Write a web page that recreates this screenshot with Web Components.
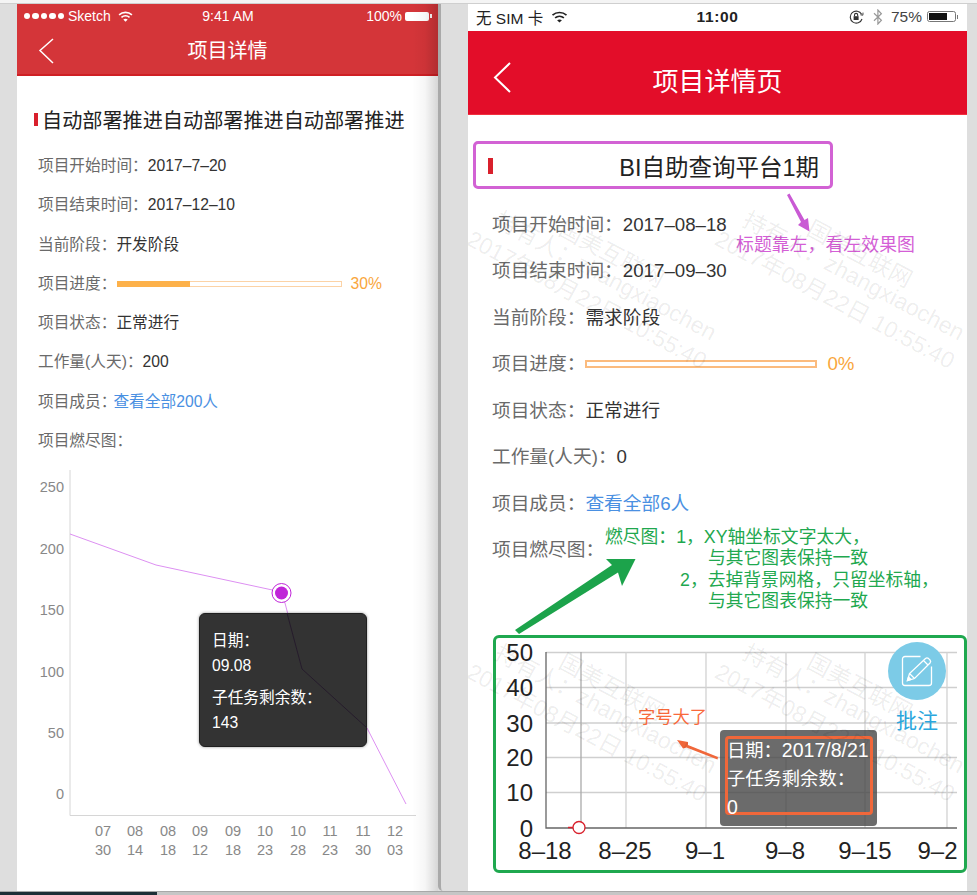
<!DOCTYPE html>
<html lang="zh">
<head>
<meta charset="utf-8">
<title>项目详情</title>
<style>
  html, body { margin: 0; padding: 0; background: #dedede; }
  body { font-family: "Liberation Sans", "Noto Sans CJK SC", sans-serif; }
</style>
</head>
<body>
<review-page>
  <phone-panel slot="left" side="left">
    <status-left></status-left>
    <nav-bar title="项目详情" variant="left"></nav-bar>
    <page-title variant="left">自动部署推进自动部署推进自动部署推进</page-title>
    <info-list variant="left">
      <info-row label="项目开始时间：">2017–7–20</info-row>
      <info-row label="项目结束时间：">2017–12–10</info-row>
      <info-row label="当前阶段：">开发阶段</info-row>
      <info-row label="项目进度："><progress-line value="30" fill="32.5"></progress-line></info-row>
      <info-row label="项目状态：">正常进行</info-row>
      <info-row label="工作量(人天)：">200</info-row>
      <info-row label="项目成员："><member-link style="margin-left:-3px">查看全部200人</member-link></info-row>
      <info-row label="项目燃尽图："></info-row>
    </info-list>
    <burn-chart></burn-chart>
  </phone-panel>

  <phone-panel slot="right" side="right">
    <status-right></status-right>
    <nav-bar title="项目详情页" variant="right"></nav-bar>
    <page-title variant="right">BI自助查询平台1期</page-title>
    <info-list variant="right">
      <info-row label="项目开始时间：">2017–08–18</info-row>
      <info-row label="项目结束时间：">2017–09–30</info-row>
      <info-row label="当前阶段：">需求阶段</info-row>
      <info-row label="项目进度："><progress-line value="0" variant="right"></progress-line></info-row>
      <info-row label="项目状态：">正常进行</info-row>
      <info-row label="工作量(人天)：">0</info-row>
      <info-row label="项目成员："><member-link>查看全部6人</member-link></info-row>
      <info-row label="项目燃尽图："></info-row>
    </info-list>
    <grid-chart></grid-chart>
    <review-notes></review-notes>
    <water-mark style="left:1px;top:233px"></water-mark>
    <water-mark style="left:249px;top:233px"></water-mark>
    <water-mark style="left:1px;top:666px"></water-mark>
    <water-mark style="left:249px;top:666px"></water-mark>
  </phone-panel>
</review-page>

<script>
const wifiIcon = (color, w, h) => `
  <svg width="${w}" height="${h}" viewBox="0 0 16 12" fill="none" stroke="${color}" stroke-width="1.7">
    <path d="M1 4.2C5 .6 11 .6 15 4.2"/>
    <path d="M3.6 6.9C6.1 4.8 9.9 4.8 12.4 6.9"/>
    <path d="M8 11.6L5.6 9.2C7 8.2 9 8.2 10.4 9.2Z" fill="${color}" stroke="none"/>
  </svg>`;

class ReviewPage extends HTMLElement {
  constructor() {
    super();
    this.shadowDOM = this.attachShadow({ mode: 'open' });
  }

  connectedCallback() {
    this.shadowDOM.innerHTML = `
      <style>
        :host { display: flex; flex-direction: column; width: 977px; height: 895px; overflow: hidden; background: #dedede; }
        .top { height: 3px; background: #f4f4f4; border-bottom: 1px solid #cfcfcf; flex: none; }
        .main { flex: 1; display: flex; min-height: 0; padding-left: 17px; }
        .gap { width: 30px; flex: none; border-left: 3px solid #a9a9a9; box-sizing: border-box; border-bottom-left-radius: 5px; }
        .bottom { height: 4px; flex: none; display: flex; background: #c6c6c6; border-top: 1px solid #a8a8a8; box-sizing: border-box; }
        .dark { width: 157px; background: #1e2f37; }
      </style>
      <div class="top"></div>
      <div class="main">
        <slot name="left"></slot>
        <div class="gap"></div>
        <slot name="right"></slot>
      </div>
      <div class="bottom"><div class="dark"></div></div>
    `;
  }
}

class PhonePanel extends HTMLElement {
  constructor() {
    super();
    this.shadowDOM = this.attachShadow({ mode: 'open' });
  }

  connectedCallback() {
    const isLeft = this.getAttribute('side') === 'left';
    this.shadowDOM.innerHTML = `
      <style>
        :host { display: block; position: relative; overflow: hidden; background: #fff; height: 887px; flex: none; width: ${isLeft ? 421 : 499}px; }
        .edge { position: absolute; top: 0; bottom: 0; right: 0; width: 26px; pointer-events: none;
          background: linear-gradient(to right, rgba(0,0,0,0), rgba(0,0,0,.035) 50%, rgba(0,0,0,.16)); }
      </style>
      <slot></slot>
      ${isLeft ? '<div class="edge"></div>' : ''}
    `;
  }
}

class StatusLeft extends HTMLElement {
  constructor() {
    super();
    this.shadowDOM = this.attachShadow({ mode: 'open' });
  }

  connectedCallback() {
    this.shadowDOM.innerHTML = `
      <style>
        :host { display: grid; grid-template-columns: 1fr auto 1fr; align-items: center; height: 27px; background: #d43539; color: #fff; font-size: 14px; padding: 0 6px 3px 7px; box-sizing: border-box; }
        .l, .r { display: flex; align-items: center; }
        .r { justify-content: flex-end; gap: 3px; }
        .dots { display: flex; gap: 2px; margin-right: 4px; }
        .dots i { width: 6.4px; height: 6.4px; border-radius: 50%; background: #fff; display: block; }
        svg { margin-left: 7px; }
        .batt { width: 24px; height: 9px; background: #fff; border-radius: 2px; position: relative; margin-right: 3px; }
        .batt::after { content: ""; position: absolute; right: -2.5px; top: 2.5px; width: 2px; height: 4px; background: #fff; }
      </style>
      <div class="l">
        <div class="dots"><i></i><i></i><i></i><i></i><i></i></div>
        <span>Sketch</span>${wifiIcon('#fff', 15, 11)}
      </div>
      <div>9:41 AM</div>
      <div class="r"><span>100%</span><div class="batt"></div></div>
    `;
  }
}

class StatusRight extends HTMLElement {
  constructor() {
    super();
    this.shadowDOM = this.attachShadow({ mode: 'open' });
  }

  connectedCallback() {
    this.shadowDOM.innerHTML = `
      <style>
        :host { display: grid; grid-template-columns: 1fr auto 1fr; align-items: center; height: 27px; background: #fff; color: #222; font-size: 15.5px; padding: 0 8px 2px; box-sizing: border-box; }
        .l, .r { display: flex; align-items: center; }
        .l svg { margin-left: 8px; }
        .r { justify-content: flex-end; color: #444; }
        .time { font-weight: 700; letter-spacing: .6px; }
        .lock { margin-right: 9px; }
        .bt { margin-right: 8px; }
        .batt { width: 29px; height: 11px; border: 1px solid #777; border-radius: 2.5px; box-sizing: border-box; padding: 1px; margin: 0 3px 0 5px; position: relative; }
        .batt i { display: block; height: 100%; width: 72%; background: #111; }
        .batt::after { content: ""; position: absolute; right: -3px; top: 2.5px; width: 1.5px; height: 4px; background: #777; }
      </style>
      <div class="l"><span>无 SIM 卡</span>${wifiIcon('#222', 17, 12)}</div>
      <div class="time">11:00</div>
      <div class="r">
        <svg class="lock" width="15" height="14" viewBox="0 0 15 14" fill="none" stroke="#333" stroke-width="1.1">
          <path d="M12.6 4.3A6 6 0 1 0 13 9"/>
          <path d="M11.4 4.8L13.9 5.2L14 2.6" stroke-width=".9"/>
          <rect x="4.6" y="6.2" width="5" height="3.8" fill="#333" stroke="none"/>
          <path d="M5.5 6.2V5a1.6 1.6 0 0 1 3.2 0v1.2"/>
        </svg>
        <svg class="bt" width="10" height="16" viewBox="0 0 10 16" fill="none" stroke="#999" stroke-width="1.2">
          <path d="M1 4.2L8.4 11.2L4.9 15V1L8.4 4.8L1 11.8"/>
        </svg>
        <span>75%</span>
        <div class="batt"><i></i></div>
      </div>
    `;
  }
}

class NavBar extends HTMLElement {
  constructor() {
    super();
    this.shadowDOM = this.attachShadow({ mode: 'open' });
  }

  connectedCallback() {
    const big = this.getAttribute('variant') === 'right';
    this.shadowDOM.innerHTML = `
      <style>
        :host { display: flex; align-items: center; justify-content: center; position: relative; box-sizing: border-box;
          height: ${big ? 84 : 45}px; background: ${big ? '#e30d29' : '#d43539'};
          border-bottom: ${big ? '1px solid #f2303f' : '2px solid #cf1f24'}; color: #fff; font-size: ${big ? 26 : 20}px; }
        svg { position: absolute; left: ${big ? 24 : 21}px; top: ${big ? 30 : 6}px; }
        span { margin-top: ${big ? 14 : -6}px; }
      </style>
      ${big
        ? `<svg width="20" height="32" viewBox="0 0 20 32" fill="none" stroke="#fff" stroke-width="2"><path d="M18 2L3 16.5L18 31"/></svg>`
        : `<svg width="16" height="27" viewBox="0 0 16 27" fill="none" stroke="#fff" stroke-width="1.5"><path d="M15 2L2 13.5L15 26"/></svg>`}
      <span>${this.getAttribute('title')}</span>
    `;
  }
}

class PageTitle extends HTMLElement {
  constructor() {
    super();
    this.shadowDOM = this.attachShadow({ mode: 'open' });
  }

  connectedCallback() {
    const big = this.getAttribute('variant') === 'right';
    this.shadowDOM.innerHTML = `
      <style>
        :host { display: flex; align-items: center; box-sizing: border-box; color: #222; }
        :host([variant=left]) { margin: 30px 0 14px 17px; height: 26px; font-size: 20.15px; }
        :host([variant=right]) { margin: 26px 0 12.5px 5px; width: 360px; height: 48px; padding: 1px 11px 0 12px; font-size: 23.5px;
          border: 3px solid #d262d4; border-radius: 5px; justify-content: space-between; }
        i { display: block; flex: none; background: #d9202c; width: ${big ? 5 : 4}px; height: ${big ? 16 : 13}px; margin-right: 4px; }
      </style>
      <i></i><div><slot></slot></div>
    `;
  }
}

class InfoList extends HTMLElement {
  constructor() {
    super();
    this.shadowDOM = this.attachShadow({ mode: 'open' });
  }

  connectedCallback() {
    this.shadowDOM.innerHTML = `
      <style>
        :host { display: block; }
        :host([variant=left]) { padding-left: 21px; font-size: 15.7px; --row-h: 39.3px; --bar-w: 225px; --bar-h: 6px; --pct-gap: 8px; --bar-left: 1px; }
        :host([variant=right]) { padding-left: 24px; font-size: 18.7px; --row-h: 46.5px; --bar-w: 232px; --bar-h: 8px; --pct-gap: 10px; --bar-left: 0px; }
      </style>
      <slot></slot>
    `;
  }
}

class InfoRow extends HTMLElement {
  constructor() {
    super();
    this.shadowDOM = this.attachShadow({ mode: 'open' });
  }

  connectedCallback() {
    this.shadowDOM.innerHTML = `
      <style>
        :host { display: flex; align-items: baseline; height: var(--row-h); line-height: var(--row-h); color: #333; white-space: nowrap; }
        .label { color: #6a6a6a; }
      </style>
      <span class="label">${this.getAttribute('label')}</span><slot></slot>
    `;
  }
}

class ProgressLine extends HTMLElement {
  constructor() {
    super();
    this.shadowDOM = this.attachShadow({ mode: 'open' });
  }

  connectedCallback() {
    const value = this.getAttribute('value');
    const fill = this.getAttribute('fill') || value;
    const big = this.getAttribute('variant') === 'right';
    this.shadowDOM.innerHTML = `
      <style>
        :host { display: flex; align-items: center; align-self: center; color: #f9a63c; margin-left: var(--bar-left); }
        .bar { width: var(--bar-w); height: var(--bar-h); box-sizing: border-box; border: ${big ? '2px solid #fbbb7e' : '1px solid #fcd3a6'}; margin-right: var(--pct-gap); }
        .fill { height: 100%; width: ${fill}%; margin: ${big ? 0 : '-1px 0 0 -1px'}; padding-bottom: ${big ? 0 : '2px'}; background: #fdb14a; }
      </style>
      <div class="bar"><div class="fill"></div></div><span>${value}%</span>
    `;
  }
}

class MemberLink extends HTMLElement {
  constructor() {
    super();
    this.shadowDOM = this.attachShadow({ mode: 'open' });
  }

  connectedCallback() {
    this.shadowDOM.innerHTML = `
      <style>:host { display: inline; color: #4a90e2; }</style>
      <slot></slot>
    `;
  }
}

class BurnChart extends HTMLElement {
  constructor() {
    super();
    this.shadowDOM = this.attachShadow({ mode: 'open' });
  }

  connectedCallback() {
    const yTicks = [[250, 487], [200, 549], [150, 610], [100, 672], [50, 733], [0, 794]];
    const xTicks = [[103, '07', '30'], [135, '08', '14'], [168, '08', '18'], [200, '09', '12'], [233, '09', '18'],
      [265, '10', '23'], [298, '10', '28'], [330, '11', '23'], [363, '11', '30'], [395, '12', '03']];
    this.shadowDOM.innerHTML = `
      <style>
        :host { display: block; position: relative; height: 431px; margin-top: -.4px; }
        svg { display: block; }
        text { font-family: "Liberation Sans", sans-serif; font-size: 14.5px; fill: #888; }
        .tip { position: absolute; left: 182px; top: 153px; width: 168px; height: 134px; box-sizing: border-box;
          padding: 14px 12px; background: #333; border: 1px solid #1f1f1f; border-radius: 6px; box-shadow: 0 0 3px rgba(0,0,0,.45);
          color: #fff; font-size: 15.7px; line-height: 25px; }
        .tip div + div { margin-top: 7px; }
        .tip svg { position: absolute; left: -1px; top: -1px; }
      </style>
      <svg width="421" height="431" viewBox="17 460 421 431">
        <path d="M70 470V815.5H416" fill="none" stroke="#d6d6d6" stroke-width="1"/>
        <polyline points="70,534 156,565 277,591 285,603 302,669 367,728 406,804" fill="none" stroke="#dd90f2" stroke-width="1"/>
        <circle cx="281.5" cy="593" r="9.5" fill="#fff" stroke="#c024d8" stroke-width="1"/>
        <circle cx="281.5" cy="593" r="6.5" fill="#c024d8"/>
        ${yTicks.map(([v, y]) => `<text x="64" y="${y + 5}" text-anchor="end">${v}</text>`).join('')}
        ${xTicks.map(([x, a, b]) => `<text x="${x}" y="836" text-anchor="middle">${a}</text><text x="${x}" y="855" text-anchor="middle">${b}</text>`).join('')}
      </svg>
      <div class="tip">
        <svg width="168" height="134" viewBox="199 613 168 134" fill="none" stroke="#261c2c" stroke-width="1">
          <polyline points="287,613 302,669 367,728"/>
        </svg>
        <div>日期：<br>09.08</div>
        <div>子任务剩余数：<br>143</div>
      </div>
    `;
  }
}

class GridChart extends HTMLElement {
  constructor() {
    super();
    this.shadowDOM = this.attachShadow({ mode: 'open' });
  }

  connectedCallback() {
    const rows = [[50, 653.5], [40, 688.5], [30, 724], [20, 758.5], [10, 793.5]];
    const cols = [626, 706, 786, 865, 947];
    const xs = [[545, '8–18'], [625, '8–25'], [705, '9–1'], [785, '9–8'], [865, '9–15']];
    this.shadowDOM.innerHTML = `
      <style>
        :host { display: block; position: relative; box-sizing: border-box; width: 474px; height: 238px; margin: 61.5px 0 0 25px;
          border: 3px solid #1fa84f; border-radius: 6px; }
        svg { display: block; }
        text { font-family: "Liberation Sans", sans-serif; font-size: 24px; fill: #222; }
        .tip { position: absolute; left: 224px; top: 92px; width: 157px; height: 96px; box-sizing: border-box; padding: 6px 0 0 5px;
          background: rgba(70,70,70,.8); border-radius: 4px; }
        .inner { height: 79px; width: 148px; box-sizing: border-box; border: 3px solid #f0673a; border-radius: 4px;
          color: #fff; font-size: 18.3px; line-height: 28px; white-space: nowrap; }
        .lines { margin: -3px 0 0 -1px; }
        .num { font-size: 19.5px; }
        .pen { position: absolute; left: 392px; top: 4px; width: 58px; height: 58px; border-radius: 50%; background: #7ccbe7; display: flex; align-items: center; justify-content: center; }
        .label { position: absolute; left: 392px; top: 71px; width: 58px; text-align: center; font-size: 21px; line-height: 24px; color: #2aa6dd; }
      </style>
      <svg width="468" height="232" viewBox="496 639 468 232">
        ${rows.map(([v, y]) => `<path d="M546 ${y}H957" stroke="#cfcfcf" stroke-width="1.3"/><text x="533" y="${y + 8.5}" text-anchor="end">${v}</text>`).join('')}
        <text x="533" y="837.5" text-anchor="end">0</text>
        ${cols.map(x => `<path d="M${x} 653V829" stroke="#d2d2d2" stroke-width="1.3"/>`).join('')}
        <path d="M581 653V829" stroke="#aaa" stroke-width="1.3"/>
        <path d="M546 653V829H957" fill="none" stroke="#666" stroke-width="1.3"/>
        ${xs.map(([x, t]) => `<text x="${x}" y="859.5" text-anchor="middle">${t}</text>`).join('')}
        <text x="957.5" y="859.5" text-anchor="end">9–2</text>
        <path d="M568 828.5H574" stroke="#d9202c" stroke-width="1.5"/>
        <circle cx="579" cy="828.5" r="6" fill="#fff" stroke="#d9202c" stroke-width="1.3"/>
      </svg>
      <div class="tip"><div class="inner"><div class="lines">日期：<span class="num">2017/8/21</span><br>子任务剩余数：<br><span class="num">0</span></div></div></div>
      <div class="pen">
        <svg width="32" height="32" viewBox="0 0 32 32" fill="none" stroke="#fff" stroke-width="1.3">
          <path d="M19.5 1.5H4A2.5 2.5 0 0 0 1.5 4V28A2.5 2.5 0 0 0 4 30.5H28A2.5 2.5 0 0 0 30.5 28V11.5"/>
          <path d="M6.5 25.5L8.5 18.5L24.5 3.5Q26 2.2 27.6 3.6L29 5Q30.3 6.6 29 8L13.5 23.5Z"/>
          <path d="M8.5 18.5L13.5 23.5M22.5 5.5L27 10"/>
          <path d="M6.5 25.5L7.5 22L10 24.5Z" fill="#fff"/>
        </svg>
      </div>
      <div class="label">批注</div>
    `;
  }
}

class ReviewNotes extends HTMLElement {
  constructor() {
    super();
    this.shadowDOM = this.attachShadow({ mode: 'open' });
  }

  connectedCallback() {
    this.shadowDOM.innerHTML = `
      <style>
        :host { position: absolute; inset: 0; display: block; pointer-events: none; }
        svg { position: absolute; left: 0; top: 0; }
        .note { position: absolute; white-space: nowrap; font-size: 17.8px; line-height: 21.3px; }
        .purple { left: 268px; top: 230.5px; color: #d45fd6; font-size: 17.9px; }
        .green { left: 137px; top: 523px; color: #1fa84f; }
        .green div:nth-child(2), .green div:nth-child(4) { padding-left: 103px; }
        .green div:nth-child(3) { padding-left: 75px; }
        .orange { left: 170px; top: 703px; color: #f9693b; font-size: 17.3px; }
      </style>
      <svg width="499" height="887" viewBox="468 4 499 887">
        <polygon points="787,195 801,222 798,225 809.5,231.5 808,218 804.5,220 789.5,193.5" fill="#c95ad4"/>
        <polygon points="515,630 612,565 606,559 635.5,559 622,586 618,572.5 519,634" fill="#1ca34b"/>
        <polygon points="718,757 688,745 688,742 677,740 683,748.5 686.5,747.5 717.5,759.5" fill="#f0673a"/>
      </svg>
      <div class="note purple">标题靠左，看左效果图</div>
      <div class="note green">
        <div>燃尽图：1，XY轴坐标文字太大，</div>
        <div>与其它图表保持一致</div>
        <div>2，去掉背景网格，只留坐标轴，</div>
        <div>与其它图表保持一致</div>
      </div>
      <div class="note orange">字号大了</div>
    `;
  }
}

class WaterMark extends HTMLElement {
  constructor() {
    super();
    this.shadowDOM = this.attachShadow({ mode: 'open' });
  }

  connectedCallback() {
    this.shadowDOM.innerHTML = `
      <style>
        :host { position: absolute; display: block; width: 0; height: 0; pointer-events: none; }
        span { position: absolute; white-space: nowrap; font-size: 23px; line-height: 30px; margin-top: -15px; color: rgba(0,0,0,.08);
          transform: rotate(28deg); transform-origin: 0 50%; }
      </style>
      <span style="left:92px;top:-10px">国美互联网</span>
      <span style="left:28px;top:-19px">持有人：zhangxiaochen</span>
      <span style="left:0;top:0">2017年08月22日 10:55:40</span>
    `;
  }
}

customElements.define('review-page', ReviewPage);
customElements.define('phone-panel', PhonePanel);
customElements.define('status-left', StatusLeft);
customElements.define('status-right', StatusRight);
customElements.define('nav-bar', NavBar);
customElements.define('page-title', PageTitle);
customElements.define('info-list', InfoList);
customElements.define('info-row', InfoRow);
customElements.define('progress-line', ProgressLine);
customElements.define('member-link', MemberLink);
customElements.define('burn-chart', BurnChart);
customElements.define('grid-chart', GridChart);
customElements.define('review-notes', ReviewNotes);
customElements.define('water-mark', WaterMark);
</script>
</body>
</html>
